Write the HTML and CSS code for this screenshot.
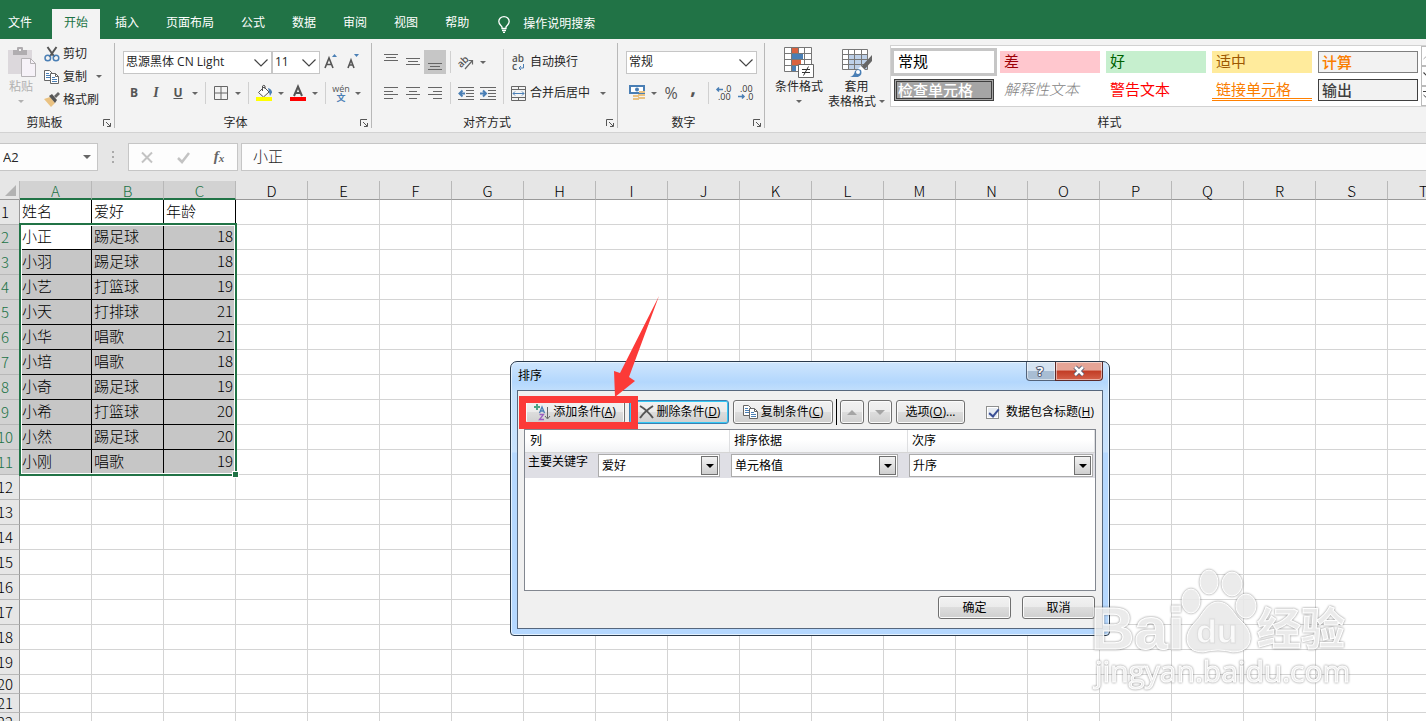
FILE: index.html
```html
<!DOCTYPE html>
<html lang="zh-CN">
<head>
<meta charset="utf-8">
<title>排序</title>
<link rel="stylesheet" href="styles.css">
</head>
<body>
<svg width="0" height="0" class="defs">
	<symbol id="caret" viewBox="0 0 6 3"><path d="M0 0h6L3 3z" fill="currentColor"/></symbol>
	<symbol id="chevron" viewBox="0 0 14 8"><path d="M.5 .5L7 7 13.500 .5" fill="none" stroke="#444" stroke-width="1.200"/></symbol>
	<symbol id="launch" viewBox="0 0 8 8"><path d="M.5 7V.5H7M3 3l4 4M7.500 4v3.500H4" fill="none" stroke="#555"/></symbol>
	<symbol id="copy" viewBox="0 0 16 14"><path d="M.5 .5h5l3 3v7h-8z" fill="#fff" stroke="#666"/><path d="M2 3.500h3M2 5.500h4M2 7.500h4" stroke="#4a7fb5"/><path d="M6.500 3.500h5l3 3v7h-8z" fill="#fff" stroke="#666"/><path d="M11.500 3.500v3h3" fill="none" stroke="#666"/><path d="M8 7.500h3M8 9.500h5M8 11.500h5" stroke="#4a7fb5"/></symbol>
</svg>

<ul class="tabs">
	<li><button class="tab file">文件</button></li>
	<li><button class="tab on">开始</button></li>
	<li><button class="tab">插入</button></li>
	<li><button class="tab">页面布局</button></li>
	<li><button class="tab">公式</button></li>
	<li><button class="tab">数据</button></li>
	<li><button class="tab">审阅</button></li>
	<li><button class="tab">视图</button></li>
	<li><button class="tab">帮助</button></li>
	<li><button class="tab tell"><svg width="12" height="17" viewBox="0 0 12 17" fill="none" stroke="#fff" stroke-width="1.300"><path d="M4 12.500V11C3.500 9.500 .8 8.500 .8 5.600a5.200 5 0 0 1 10.400 0C11.200 8.500 8.500 9.500 8 11v1.500zM4 14.500h4M5 16.300h2"/></svg>操作说明搜索</button></li>
</ul>

<div class="ribbon">
	<div class="group clip">
		<div class="body">
			<button class="big paste" disabled>
				<svg width="29" height="31" viewBox="0 0 29 31"><path d="M1 3h24v24H1z" fill="#dcd8dc"/><path d="M6 3h4V1q0-1 1-1h4q1 0 1 1v2h4v5H6z" fill="#b0adb0"/><path d="M12 2h2v2h-2z" fill="#f3f3f3"/><path d="M14.500 11.500h9l5 5v13h-14z" fill="#f6f2f8" stroke="#b5b2b5"/><path d="M23.500 11.500v5h5" fill="none" stroke="#b5b2b5"/></svg>
				<span>粘贴</span>
				<svg class="caret" width="6" height="3"><use href="#caret"/></svg>
			</button>
			<div class="stack">
				<button class="cmd"><svg width="16" height="16" viewBox="0 0 16 16" fill="none"><path d="M3.500 1L10.500 11M12.500 1L5.500 11" stroke="#555" stroke-width="2"/><circle cx="3.800" cy="12" r="2.800" stroke="#4a7fb5" stroke-width="1.500"/><circle cx="12" cy="12" r="2.800" stroke="#4a7fb5" stroke-width="1.500"/></svg>剪切</button>
				<button class="cmd"><svg width="16" height="14"><use href="#copy"/></svg>复制<svg class="caret far" width="6" height="3"><use href="#caret"/></svg></button>
				<button class="cmd"><svg width="16" height="15" viewBox="0 0 16 15"><path d="M0 7l6-2 5 6-4 4z" fill="#eac282"/><path d="M5 4l3-2 5 6-2 3z" fill="#555"/><path d="M10 4l4-4 2 2-4 4z" fill="#666"/></svg>格式刷</button>
			</div>
		</div>
		<div class="foot"><span>剪贴板</span><button class="launch" aria-label="剪贴板选项"><svg width="8" height="8"><use href="#launch"/></svg></button></div>
	</div>

	<div class="group font">
		<div class="body col">
			<div class="line">
				<div class="combo name"><select aria-label="字体"><option>思源黑体 CN Light</option></select><svg width="14" height="8"><use href="#chevron"/></svg></div>
				<div class="combo size"><select aria-label="字号"><option>11</option></select><svg width="14" height="8"><use href="#chevron"/></svg></div>
				<button class="ico" aria-label="增大字号"><svg width="14" height="16" viewBox="0 0 14 16"><path d="M1 14L5 4l4 10M2.500 10.500h5" fill="none" stroke="#555" stroke-width="1.600"/><path d="M8 3h5l-2.500-3z" fill="#4a7fb5"/></svg></button>
				<button class="ico" aria-label="减小字号"><svg width="14" height="16" viewBox="0 0 14 16"><path d="M2 14l3-8 3 8M3 11h4" fill="none" stroke="#555" stroke-width="1.600"/><path d="M8 0h5l-2.500 3z" fill="#4a7fb5"/></svg></button>
			</div>
			<div class="line">
				<button class="ico"><b>B</b></button>
				<button class="ico"><i>I</i></button>
				<button class="ico"><u>U</u></button>
				<button class="arr" aria-label="下划线"><svg class="caret" width="6" height="3"><use href="#caret"/></svg></button>
				<span class="sep"></span>
				<button class="ico" aria-label="边框"><svg width="14" height="14" viewBox="0 0 14 14"><path d="M.5 .5h13v13H.5zM7 0v14M0 7h14" fill="none" stroke="#666"/></svg></button>
				<button class="arr" aria-label="更多边框"><svg class="caret" width="6" height="3"><use href="#caret"/></svg></button>
				<span class="sep"></span>
				<button class="ico" aria-label="填充颜色"><svg width="16" height="16" viewBox="0 0 16 16"><path d="M2.500 7.500L8 2l5 5-5.500 5z" fill="#fff" stroke="#555"/><path d="M6.500 6V1q1.500-1.500 2.500 0v3" fill="none" stroke="#555"/><path d="M12 3q4 1 4 4.500L14 11l-1-4z" fill="#4a7fb5"/><path d="M0 12h16v4H0z" fill="#ff0"/></svg></button>
				<button class="arr" aria-label="更多填充颜色"><svg class="caret" width="6" height="3"><use href="#caret"/></svg></button>
				<button class="ico" aria-label="字体颜色"><svg width="16" height="16" viewBox="0 0 16 16"><path d="M4 11L8 1.500 12 11M5.500 8h5" fill="none" stroke="#555" stroke-width="2"/><path d="M0 12h16v4H0z" fill="#f00"/></svg></button>
				<button class="arr" aria-label="更多字体颜色"><svg class="caret" width="6" height="3"><use href="#caret"/></svg></button>
				<span class="sep"></span>
				<button class="ico wen"><span>wén</span><em>文</em></button>
				<button class="arr" aria-label="拼音"><svg class="caret" width="6" height="3"><use href="#caret"/></svg></button>
			</div>
		</div>
		<div class="foot"><span>字体</span><button class="launch" aria-label="字体选项"><svg width="8" height="8"><use href="#launch"/></svg></button></div>
	</div>

	<div class="group align">
		<div class="body">
			<div class="col">
				<div class="line">
					<button class="ico" aria-label="顶端对齐"><svg width="14" height="16" viewBox="0 0 14 16" stroke="#666"><path d="M0 .5h14M2 3.500h10M0 6.500h14"/></svg></button>
					<button class="ico" aria-label="垂直居中"><svg width="14" height="16" viewBox="0 0 14 16" stroke="#666"><path d="M0 4.500h14M2 7.500h10M0 10.500h14"/></svg></button>
					<button class="ico down" aria-label="底端对齐"><svg width="14" height="16" viewBox="0 0 14 16" stroke="#666"><path d="M0 9.500h14M2 12.500h10M0 15.500h14"/></svg></button>
					<span class="sep"></span>
					<button class="ico" aria-label="方向"><svg width="18" height="16" viewBox="0 0 18 16"><text x="0" y="11" transform="rotate(-45 6 8)" class="ab">ab</text><path d="M8 15l7-8M11.500 6.500h4v4" fill="none" stroke="#666" stroke-width="1.200"/></svg></button>
					<button class="arr" aria-label="更多方向"><svg class="caret" width="6" height="3"><use href="#caret"/></svg></button>
				</div>
				<div class="line">
					<button class="ico" aria-label="左对齐"><svg width="14" height="13" viewBox="0 0 14 13" stroke="#666"><path d="M0 .5h14M0 4.500h9M0 7.500h14M0 11.500h9"/></svg></button>
					<button class="ico" aria-label="居中"><svg width="14" height="13" viewBox="0 0 14 13" stroke="#666"><path d="M0 .5h14M3 4.500h8M0 7.500h14M3 11.500h8"/></svg></button>
					<button class="ico" aria-label="右对齐"><svg width="14" height="13" viewBox="0 0 14 13" stroke="#666"><path d="M0 .5h14M5 4.500h9M0 7.500h14M5 11.500h9"/></svg></button>
					<span class="sep"></span>
					<button class="ico" aria-label="减少缩进"><svg width="16" height="13" viewBox="0 0 16 13"><path d="M0 .5h16M8 3.500h8M8 6.500h8M8 9.500h8M0 12.500h16" stroke="#666"/><path d="M7 6.500H2M4.500 3.500l-3 3 3 3" fill="none" stroke="#4a7fb5" stroke-width="2"/></svg></button>
					<button class="ico" aria-label="增加缩进"><svg width="16" height="13" viewBox="0 0 16 13"><path d="M0 .5h16M8 3.500h8M8 6.500h8M8 9.500h8M0 12.500h16" stroke="#666"/><path d="M0 6.500h5M3 3.500l3 3-3 3" fill="none" stroke="#4a7fb5" stroke-width="2"/></svg></button>
				</div>
			</div>
			<span class="sep tall"></span>
			<div class="col wide">
				<button class="cmd"><svg width="15" height="17" viewBox="0 0 15 17"><text x="1" y="8" class="ab">ab</text><text x="1" y="16" class="ab">c</text><path d="M12.500 10v4H8.500M10 12l-2 2 2 2" fill="none" stroke="#4a7fb5"/></svg>自动换行</button>
				<button class="cmd"><svg width="15" height="15" viewBox="0 0 15 15" fill="none"><path d="M.5 .5h14v14H.5zM0 3.500h15M0 11.500h15M7.500 0v3M7.500 12v3" stroke="#666"/><path d="M2 7.500h11M4 5.500l-2 2 2 2M11 5.500l2 2-2 2" stroke="#4a7fb5"/></svg>合并后居中<svg class="caret far" width="6" height="3"><use href="#caret"/></svg></button>
			</div>
		</div>
		<div class="foot"><span>对齐方式</span><button class="launch" aria-label="对齐选项"><svg width="8" height="8"><use href="#launch"/></svg></button></div>
	</div>

	<div class="group number">
		<div class="body col">
			<div class="line">
				<div class="combo fmt"><select aria-label="数字格式"><option>常规</option></select><svg width="14" height="8"><use href="#chevron"/></svg></div>
			</div>
			<div class="line">
				<button class="ico" aria-label="会计格式"><svg width="17" height="16" viewBox="0 0 17 16"><path d="M1 1h14v7H1z" fill="#fff" stroke="#4a7fb5" stroke-width="2"/><circle cx="8" cy="4.500" r="2" fill="#4a7fb5"/><path d="M10 6h6v2h-6zM9 9h7v2H9zM4 10h6v2H4zM9 12h7v2H9zM4 13h6v2H4z" fill="#eac282"/></svg></button>
				<button class="arr" aria-label="更多会计格式"><svg class="caret" width="6" height="3"><use href="#caret"/></svg></button>
				<button class="ico pct">%</button>
				<button class="ico comma">,</button>
				<span class="sep"></span>
				<button class="ico" aria-label="增加小数位数"><svg width="16" height="16" viewBox="0 0 16 16"><text x="8" y="7" class="dec">.0</text><text x="2" y="15" class="dec">.00</text><path d="M7 4.500H1M3 2.500l-2 2 2 2" fill="none" stroke="#4a7fb5" stroke-width="1.500"/></svg></button>
				<button class="ico" aria-label="减少小数位数"><svg width="16" height="16" viewBox="0 0 16 16"><text x="2" y="7" class="dec">.00</text><text x="8" y="15" class="dec">.0</text><path d="M0 11.500h6M4 9.500l2 2-2 2" fill="none" stroke="#4a7fb5" stroke-width="1.500"/></svg></button>
			</div>
		</div>
		<div class="foot"><span>数字</span><button class="launch" aria-label="数字选项"><svg width="8" height="8"><use href="#launch"/></svg></button></div>
	</div>

	<div class="group styles">
		<div class="body">
			<button class="big">
				<svg width="30" height="31" viewBox="0 0 30 31"><path d="M.5 .5h27v24H.5z" fill="#fff"/><path d="M8 1h6v5H8zM8 13h9v5H8z" fill="#d9623f"/><path d="M8 7h11v5H8zM8 19h4v5H8z" fill="#4a7fb5"/><path d="M.5 .5h27v24H.5zM7.500 0v25M14.500 0v6M20.500 0v25M0 6.500h28M0 12.500h28M0 18.500h28" fill="none" stroke="#777"/><path d="M14.500 17.500h15v13h-15z" fill="#fff" stroke="#666"/><path d="M18 22.500h8M18 25.500h8M24.500 19.500l-5 9" stroke="#333"/></svg>
				<span>条件格式</span>
				<svg class="caret" width="6" height="3"><use href="#caret"/></svg>
			</button>
			<button class="big tablefmt">
				<svg width="30" height="31" viewBox="0 0 30 31"><path d="M.5 2.500h25v20H.5z" fill="#fff"/><path d="M7 8h18v15H7z" fill="#bdd0e8"/><path d="M.5 2.500h25v20H.5zM6.500 2v21M12.500 2v21M19.500 2v21M0 7.500h26M0 12.500h26M0 17.500h26" fill="none" stroke="#777"/><path d="M30 8v6l-8 9-3-3z" fill="#666"/><path d="M19 19l4 4-3 3-4-4z" fill="#fff"/><path d="M8 30q4-1 5-6 3-3 6-1 2 5-3 7z" fill="#4a7fb5"/><circle cx="16" cy="25" r="2" fill="#fff"/></svg>
				<span>套用</span>
				<span class="two">表格格式<svg class="caret" width="6" height="3"><use href="#caret"/></svg></span>
			</button>
			<div class="gallery">
				<div class="swatches">
					<button class="normal">常规</button>
					<button class="bad">差</button>
					<button class="good">好</button>
					<button class="neutral">适中</button>
					<button class="calc">计算</button>
					<button class="check">检查单元格</button>
					<button class="explain">解释性文本</button>
					<button class="warn">警告文本</button>
					<button class="linked">链接单元格</button>
					<button class="output">输出</button>
				</div>
				<div class="scroll">
					<button aria-label="上一行"><svg width="14" height="8" viewBox="0 0 14 8"><path d="M.5 7L7 1l6.500 6" fill="none" stroke="#aaa"/></svg></button>
					<button aria-label="下一行"><svg width="14" height="8"><use href="#chevron"/></svg></button>
					<button aria-label="其他"><svg width="14" height="11" viewBox="0 0 14 11"><path d="M0 .5h14M.5 4L7 10l6.500-6" fill="none" stroke="#444"/></svg></button>
				</div>
			</div>
		</div>
		<div class="foot"><span>样式</span></div>
	</div>
</div>

<div class="formula">
	<div class="namebox"><input type="text" value="A2" aria-label="名称框"><svg class="caret" width="8" height="4"><use href="#caret"/></svg></div>
	<svg class="dots" width="2" height="12" viewBox="0 0 2 12"><path d="M0 0h2v2H0zM0 5h2v2H0zM0 10h2v2H0z" fill="#aaa"/></svg>
	<div class="fxbox">
		<button aria-label="取消输入"><svg width="12" height="11" viewBox="0 0 12 11"><path d="M1 .5l10 10M11 .5l-10 10" stroke="#c3c3c3" stroke-width="2"/></svg></button>
		<button aria-label="确认输入"><svg width="13" height="11" viewBox="0 0 13 11"><path d="M1 6l4 4 7-9" fill="none" stroke="#c3c3c3" stroke-width="2.500"/></svg></button>
		<button class="fx">f<small>x</small></button>
	</div>
	<input class="content" type="text" value="小正" aria-label="编辑栏">
</div>

<div class="sheet">
	<table id="grid"></table>
	<div class="range"><span class="handle"></span></div>
</div>

<div class="dialog" role="dialog" aria-labelledby="title">
	<div class="title">
		<h2 id="title">排序</h2>
		<button class="help" aria-label="帮助"><svg width="12" height="14" viewBox="0 0 12 14"><text x="2" y="12" class="q">?</text></svg></button>
		<button class="close" aria-label="关闭"><svg width="14" height="12" viewBox="0 0 14 12"><path d="M3 2l8 8M11 2l-8 8" stroke="#555b73" stroke-width="4.500"/><path d="M3 2l8 8M11 2l-8 8" stroke="#fff" stroke-width="2.500"/></svg></button>
	</div>
	<div class="client">
		<div class="tools">
			<button class="btn"><svg width="17" height="17" viewBox="0 0 17 17"><path d="M3 0v6M0 3h6" stroke="#4aa384" stroke-width="2"/><path d="M5.500 9L8 3l2.500 6M6.500 7h3" fill="none" stroke="#4a7fb5" stroke-width="1.300"/><path d="M5.500 10.500h4l-4 5h4.500" fill="none" stroke="#9a5fc0" stroke-width="1.300"/><path d="M13.500 3v11M11 12l2.500 3 2.500-3" fill="none" stroke="#666"/></svg><span>添加条件(<u>A</u>)</span></button>
			<button class="btn focus"><svg width="17" height="14" viewBox="0 0 17 14"><path d="M2 1q7 4 13 12M15 1Q7 6 2 13" fill="none" stroke="#555" stroke-width="2"/></svg><span>删除条件(<u>D</u>)</span></button>
			<button class="btn"><svg width="16" height="14"><use href="#copy"/></svg><span>复制条件(<u>C</u>)</span></button>
			<span class="bar"></span>
			<button class="btn move" disabled aria-label="上移"><svg width="10" height="5" viewBox="0 0 10 5"><path d="M0 5h10L5 0z" fill="#a5a5a5"/></svg></button>
			<button class="btn move" disabled aria-label="下移"><svg width="10" height="5" viewBox="0 0 10 5"><path d="M0 0h10L5 5z" fill="#a5a5a5"/></svg></button>
			<button class="btn opt"><span>选项(<u>O</u>)...</span></button>
			<label class="hdr"><input type="checkbox" checked>数据包含标题(<u>H</u>)</label>
		</div>
		<div class="list">
			<div class="head"><span>列</span><span>排序依据</span><span>次序</span></div>
			<div class="level">
				<div class="cell"><label for="key">主要关键字</label><div class="drop"><select id="key"><option>爱好</option></select><span class="tri"><svg width="8" height="4"><use href="#caret"/></svg></span></div></div>
				<div class="cell"><div class="drop"><select aria-label="排序依据"><option>单元格值</option></select><span class="tri"><svg width="8" height="4"><use href="#caret"/></svg></span></div></div>
				<div class="cell"><div class="drop"><select aria-label="次序"><option>升序</option></select><span class="tri"><svg width="8" height="4"><use href="#caret"/></svg></span></div></div>
			</div>
		</div>
		<div class="actions">
			<button class="btn">确定</button>
			<button class="btn">取消</button>
		</div>
	</div>
</div>

<div class="mark"></div>
<svg class="pointer" width="46" height="102" viewBox="0 0 46 102"><path d="M45 0L15 81l6 4L1 101 0 75l6 2z" fill="#fc3a38"/></svg>

<svg class="watermark" width="270" height="130" viewBox="0 0 270 130">
	<text x="1" y="84" class="wm-bai">Bai</text>
	<g class="wm-paw">
		<ellipse cx="101" cy="36" rx="9" ry="12"/>
		<ellipse cx="119" cy="17" rx="9" ry="12"/>
		<ellipse cx="142" cy="19" rx="10" ry="12"/>
		<ellipse cx="156" cy="41" rx="10" ry="12"/>
		<path d="M128 37q8 0 14 8 5 8 12 14 9 10 5 20-4 8-16 8-8-2-15-2t-15 2q-12 0-15-8-3-9 4-18 7-7 12-15 6-9 14-9z"/>
	</g>
	<text x="106" y="78" class="wm-du">du</text>
	<text x="167" y="80" class="wm-cn">经验</text>
	<text x="5" y="117" class="wm-url">jingyan.baidu.com</text>
</svg>

<script src="script.js"></script>
</body>
</html>
```

FILE: styles.css
```css
* { box-sizing:border-box;}
body { margin:0; height:100vh; overflow:hidden; position:relative; background:#fff; color:#262626; font:12px/16px "Open Sans","Noto Sans CJK SC",sans-serif;}
button,input,select { font:inherit; color:inherit; margin:0; padding:0; border:0; background:none; border-radius:0; outline:none;}
svg { display:block; flex:none; overflow:visible;}
.defs { position:absolute;}
.caret { color:#666;}

/* tabs */
.tabs { display:flex; gap:3px; height:39px; margin:0; padding:9px 0 0; list-style:none; background:#217346; color:#fff;}
.tab { height:30px; padding:0 12px 2px; white-space:nowrap;}
.file { padding:0 17px 2px 8px;}
.on { background:#f3f3f3; color:#217346;}
.tell { display:flex; align-items:center; gap:13px; padding:0 12px 0 14px;}

/* ribbon */
.ribbon { display:flex; height:94px; background:#f3f3f3; border-bottom:1px solid #d2d2d2; overflow:hidden;}
.group { flex:none; display:flex; flex-direction:column; position:relative; padding:0 8px;}
.group:not(.styles):after { content:""; position:absolute; right:0; top:4px; bottom:4px; width:1px; background:#b8b8b8;}
.body { display:flex; height:74px;}
.col { display:flex; flex-direction:column; gap:7px; padding-top:11px;}
.line { display:flex; height:24px; align-items:center;}
.foot { display:flex; height:19px; align-items:center;}
.foot span { flex:1; text-align:center;}
.launch { width:16px; height:16px; display:flex; align-items:center; justify-content:center;}
.group:not(.styles) .foot { margin-right:-8px; margin-left:-8px;}
.clip { width:125px; margin-left:-10px;}
.font { width:257px;}
.align { width:246px;}
.number { width:147px;}
.big { display:flex; flex-direction:column; align-items:center; padding-top:8px; white-space:nowrap;}
.big span { margin:1px 0 5px;}
.paste { width:44px; padding-left:2px; color:#b1b1b1;}
.paste .caret { color:#b1b1b1;}
.stack { padding:3px 0 0 2px;}
.cmd { display:flex; align-items:center; gap:3px; height:23px; white-space:nowrap;}
.far { margin-left:6px;}
.ico { width:22px; height:24px; flex:none; display:flex; align-items:center; justify-content:center; color:#555;}
.ico b,.ico u { font-weight:700;}
.ico i { font-family:"Liberation Serif",serif; font-size:14px; font-weight:700;}
.arr { width:12px; height:24px; flex:none; display:flex; align-items:center; justify-content:center;}
.sep { width:1px; height:22px; margin:0 4px; flex:none; background:#d0d0d0;}
.tall { height:55px; margin-top:10px;}
.wide { padding-left:3px;}
.wide .cmd { height:24px; gap:4px;}
.down { background:#c6c6c6;}
.wen { flex-direction:column; line-height:9px; font-size:9px;}
.wen em { color:#4a7fb5; font-style:normal; font-weight:700;}
.pct { font-size:16px;}
.comma { font-size:20px; font-weight:700; padding-bottom:12px;}
.ab { font:600 10px "Open Sans",sans-serif; fill:#555;}
.dec { font:9px "Open Sans",sans-serif; fill:#333;}

.combo { position:relative; flex:none; height:23px; background:#fff; border:1px solid #c6c6c6;}
.combo select { width:100%; height:21px; padding-left:2px; appearance:none;}
.combo svg { position:absolute; right:3px; top:7px; pointer-events:none;}
.name { width:149px;}
.size { width:48px;}
.fmt { width:131px;}

.styles .body { padding-left:2px;}
.tablefmt { padding-left:5px; padding-right:5px;}
.tablefmt span { margin:1px 0 0; line-height:15px;}
.tablefmt .two { display:flex; align-items:center; gap:3px; margin:0;}
.gallery { display:flex; margin-top:6px; height:62px; background:#fff; border:1px solid #d2d2d2;}
.swatches { display:grid; grid-template-columns:repeat(5,100px); grid-auto-rows:22px; gap:6px; padding:5px 3px;}
.swatches button { text-align:left; padding:0 4px 2px; font:15px/18px "Noto Sans CJK SC",sans-serif; white-space:nowrap;}
.swatches .normal { color:#000; outline:3px solid #c6c6c6;}
.swatches .bad { background:#ffc7ce; color:#9c0006;}
.swatches .good { background:#c6efce; color:#006100;}
.swatches .neutral { background:#ffeb9c; color:#9c5700;}
.swatches .calc { background:#f2f2f2; color:#fa7d00; border:1px solid #7f7f7f; font-weight:500; padding:0 3px 1px;}
.swatches .check { background:#a5a5a5; color:#fff; border:3px double #3f3f3f; font-weight:500; padding:0 1px 1px; line-height:15px;}
.swatches .explain { color:#7f7f7f; font-style:italic; font-weight:300;}
.swatches .warn { color:#f00;}
.swatches .linked { color:#fa7d00; border-bottom:3px double #ff8001; padding-bottom:0;}
.swatches .output { background:#f2f2f2; color:#3f3f3f; border:1px solid #3f3f3f; font-weight:500; padding:0 3px 1px;}
.scroll { width:24px; display:grid; grid-template-rows:repeat(3,1fr);}
.scroll button { display:flex; align-items:center; border:1px solid #bbb; padding-left:1px;}

/* formula bar */
.formula { display:flex; height:48px; padding:10px 0; background:#e6e6e6;}
.namebox,.fxbox { display:flex; align-items:center; background:#fdfdfd; border:1px solid #c6c6c6;}
.namebox { width:98px; border-left:0; padding-right:6px;}
.namebox input { flex:1; min-width:0; padding-left:3px; font-size:13px;}
.dots { align-self:center; margin:0 14px;}
.fxbox { width:110px; margin-right:3px;}
.fxbox button { flex:1; display:flex; justify-content:center;}
.fxbox .fx { font:italic 700 15px/18px "Liberation Serif",serif; color:#666;}
.fx small { font-size:11px; padding-top:2px;}
.content { flex:1; background:#fdfdfd; border:1px solid #c6c6c6; border-right:0; padding:0 0 3px 11px; font:15px/20px "Noto Sans CJK SC",sans-serif; font-weight:300;}

/* sheet */
.sheet { position:relative; color:#000;}
#grid { table-layout:fixed; width:1469px; margin-left:-9px; border-collapse:separate; border-spacing:0; font:15px/18px "Noto Sans CJK SC",sans-serif; font-weight:300;}
#grid td,#grid th { padding:0 2px; height:25px; border:0 solid #d4d4d4; border-width:0 1px 1px 0; white-space:nowrap; font-weight:300;}
#grid td { padding-bottom:2px;}
#grid thead th { height:19px; line-height:16px; padding:2px 0 0; background:#e6e6e6; border-bottom-color:#999; border-right-color:#b8b8b8;}
#grid tbody th { padding:0; background:#e6e6e6; border-bottom-color:#b8b8b8; border-right-color:#999;}
#grid .corner { width:29px; position:relative;}
.corner svg { position:absolute; right:3px; bottom:3px;}
#grid thead .sel { background:#d2d2d2; color:#217346; border-bottom:2px solid #217346; line-height:15px;}
#grid tbody .sel { background:#d2d2d2; color:#217346;}
#grid .data { border-color:#000;}
#grid .picked { background:#c6c6c6;}
#grid .num { text-align:right;}
#grid .short td,#grid .short th { height:19px; line-height:16px;}
.range { position:absolute; left:19px; top:42px; width:218px; height:253px; border:2px solid #217346; box-shadow:inset 0 0 0 1px #fff;}
.handle { position:absolute; right:-4px; bottom:-4px; width:7px; height:7px; background:#217346; border:1px solid #fff;}

/* dialog */
.dialog { position:absolute; left:510px; top:361px; width:600px; padding:0 6px 6px; border:1px solid #2a3a4c; border-radius:7px 7px 4px 4px; background:linear-gradient(#cfe6fd,#b3d7fd 20px,#c4e0fc 30px,#c8e2fd 90px,#b5d8ff 91px); box-shadow:inset 0 0 0 1px #e4f2ff; color:#000;}
.title { display:flex; height:28px; align-items:flex-start;}
.title h2 { flex:1; margin:0; padding:6px 1px; font-size:12px; font-weight:400;}
.title button { height:19px; display:flex; align-items:center; justify-content:center; border:1px solid #53637a; border-top:0; box-shadow:inset 0 0 0 1px rgba(255,255,255,.5);}
.help { width:30px; border-radius:0 0 0 4px; background:linear-gradient(#d5e3f1 50%,#a8bdd3 50%);}
.title .close { width:48px; margin-left:-1px; border-color:#5c2a2a; border-radius:0 0 4px 0; background:linear-gradient(#e5a496 45%,#c23c25 50%,#d4614a);}
.q { font:700 13px "Open Sans",sans-serif; fill:#fff; stroke:#555b73; stroke-width:2px; paint-order:stroke;}
.client { border:1px solid #56677d; background:#f0f0f0; padding:9px 6px 9px;}
.tools { display:flex; align-items:center; gap:4px; height:24px; margin-bottom:5px; padding-left:1px; white-space:nowrap;}
.btn { display:flex; align-items:center; justify-content:center; gap:2px; width:100px; height:24px; flex:none; border:1px solid #707070; border-radius:3px; background:linear-gradient(#f2f2f2,#ebebeb 49%,#dddddd 50%,#cfcfcf); box-shadow:inset 0 0 0 1px #fbfbfb;}
.focus { border-color:#3c7fb1; box-shadow:inset 0 0 0 1px #35c8f5;}
.bar { width:1px; height:26px; margin:0 -1px; background:#000;}
.move { width:24px;}
.opt { width:69px;}
.hdr { display:flex; align-items:center; margin-left:auto; padding-right:2px;}
.hdr input { width:13px; height:13px; margin-right:7px; appearance:none; position:relative; border:1px solid #8e8f8f; background:#e6ebf2; box-shadow:inset 0 0 0 1px #fff;}
.hdr input:checked:after { content:""; position:absolute; left:4px; top:0; width:4px; height:8px; border:solid #3a4f95; border-width:0 2px 2px 0; transform:rotate(40deg);}
.list { height:162px; border:1px solid #828790; background:#fff;}
.head,.level { display:grid; grid-template-columns:205px 178px 1fr;}
.head { height:23px; border-bottom:1px solid #d5d5d5; background:linear-gradient(#fff 45%,#f3f4f6);}
.head span { padding:3px 4px; border-right:1px solid #dedfe1;}
.head span:first-child { padding-left:5px;}
.level { height:25px; background:#dfdfe5;}
.cell { display:flex; align-items:flex-start; padding:1px 10px 1px 1px;}
.cell:last-child { padding-right:2px;}
.cell label { width:72px; padding-left:2px;}
.drop { flex:1; display:flex; position:relative; height:23px; border:1px solid #ababab; background:#fff;}
.drop select { flex:1; appearance:none; padding:0 3px;}
.tri { position:absolute; right:1px; top:1px; width:17px; height:19px; display:flex; align-items:center; justify-content:center; border:1px solid #707070; background:linear-gradient(#f2f2f2,#cfcfcf); pointer-events:none;}
.tri svg { color:#000;}
.actions { display:flex; justify-content:flex-end; gap:11px; margin-top:5px; padding-right:1px;}
.actions .btn { width:73px; height:23px;}

/* annotation */
.mark { position:absolute; left:519px; top:396px; width:119px; height:33px; border:7px solid #fc3a38;}
.pointer { position:absolute; left:614px; top:296px;}

/* watermark */
.watermark { position:absolute; left:1090px; top:565px; fill:rgba(255,255,255,.8); stroke:#fff; stroke-width:1px; filter:drop-shadow(0 0 1px rgba(0,0,0,.5)); pointer-events:none;}
.wm-bai { font:700 60px "Liberation Sans",sans-serif;}
.wm-du { font:700 34px "Liberation Sans",sans-serif; stroke:#ddd;}
.wm-cn { font:700 44px "Noto Sans CJK SC",sans-serif;}
.wm-url { font:30px "Open Sans",sans-serif;}
```

FILE: script.js
```js
var data = [
	['姓名', '爱好', '年龄'],
	['小正', '踢足球', 18],
	['小羽', '踢足球', 18],
	['小艺', '打篮球', 19],
	['小天', '打排球', 21],
	['小华', '唱歌', 21],
	['小培', '唱歌', 18],
	['小奇', '踢足球', 19],
	['小希', '打篮球', 20],
	['小然', '踢足球', 20],
	['小刚', '唱歌', 19]
];
var cols = 'ABCDEFGHIJKLMNOPQRST';
var html = '<thead><tr><th class="corner"><svg width="11" height="11" viewBox="0 0 11 11"><path d="M11 0v11H0z" fill="#b3b3b3"/></svg></th>';
for (var c = 0; c < cols.length; c++) {
	html += '<th' + (c < 3 ? ' class="sel"' : '') + '>' + cols[c] + '</th>';
}
html += '</tr></thead><tbody>';
for (var r = 1; r <= 22; r++) {
	html += '<tr' + (r > 19 ? ' class="short"' : '') + '><th' + (r > 1 && r < 12 ? ' class="sel"' : '') + '>' + r + '</th>';
	for (c = 0; c < cols.length; c++) {
		var cls = '', text = '';
		if (r <= data.length && c < 3) {
			text = data[r - 1][c];
			cls = 'data';
			// the active cell A2 stays white
			if (r > 1 && !(r == 2 && c == 0)) cls += ' picked';
			if (typeof text == 'number') cls += ' num';
		}
		html += '<td' + (cls ? ' class="' + cls + '"' : '') + '>' + text + '</td>';
	}
	html += '</tr>';
}
document.getElementById('grid').innerHTML = html + '</tbody>';
```
